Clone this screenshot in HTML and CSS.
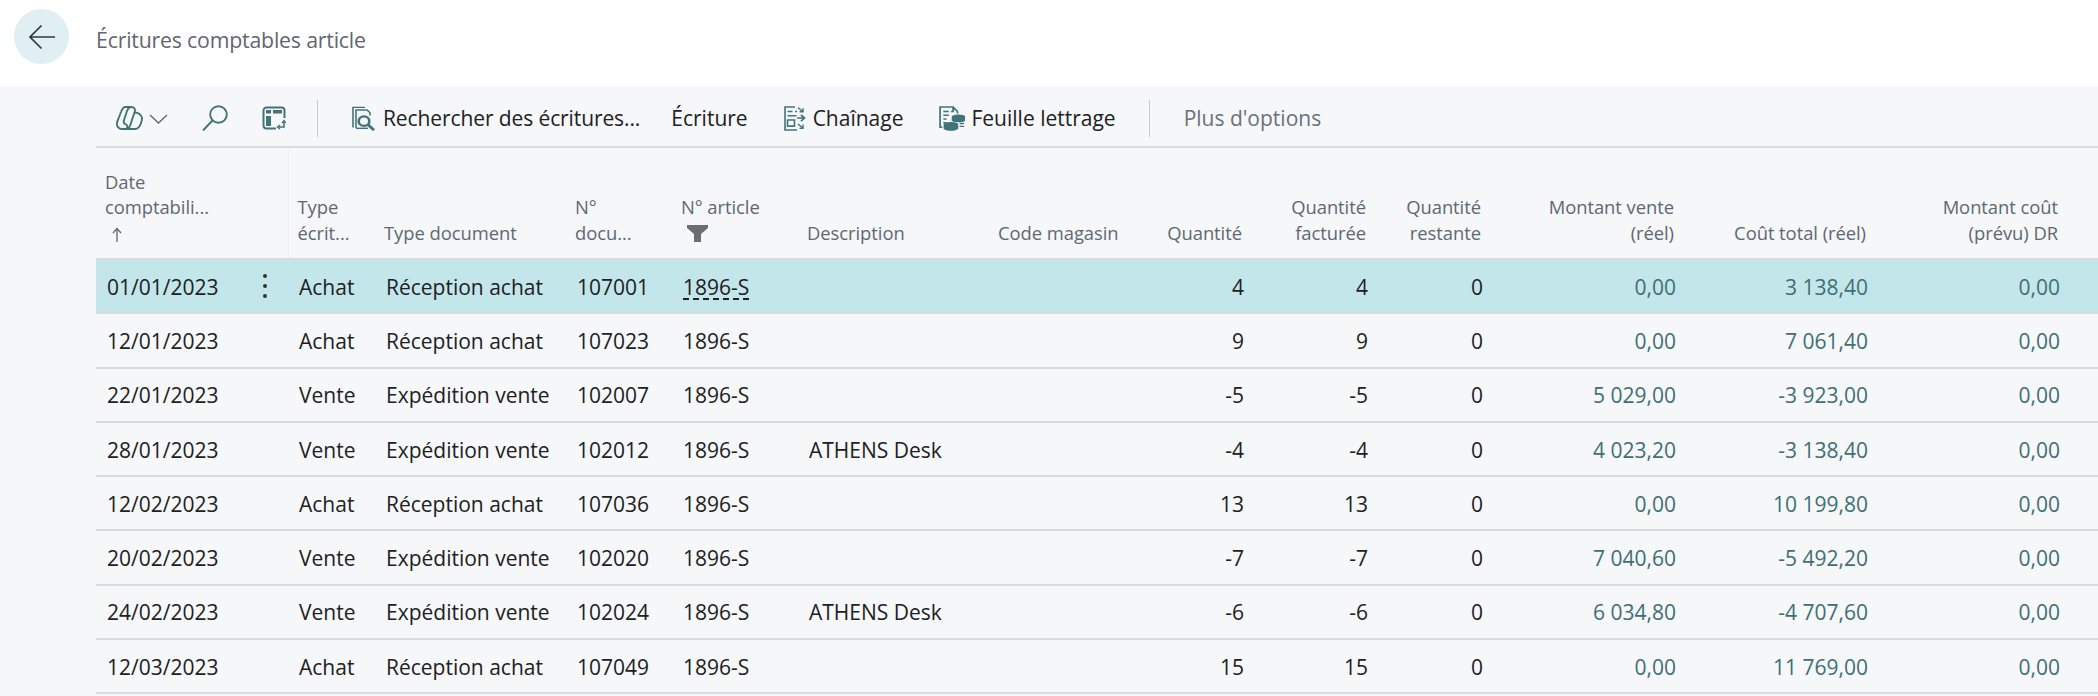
FILE: index.html
```html
<!DOCTYPE html>
<html lang="fr">
<head>
<meta charset="utf-8">
<title>Écritures comptables article</title>
<link rel="stylesheet" href="styles.css">
</head>
<body>
<header class="page-head">
  <button class="back" aria-label="Retour">
    <svg width="28" height="26" viewBox="0 0 28 26"><path d="M27 13H2M13.500 1.500 2 13l11.500 11.500" fill="none" stroke="#2f3b3f" stroke-width="1.700"/></svg>
  </button>
  <h1 class="title">Écritures comptables article</h1>
</header>
<main class="content">
  <nav class="toolbar">
    <span class="ic ic-copilot"><svg width="27" height="24" viewBox="0 0 27 24" fill="none" stroke="#417479" stroke-width="1.900"><path d="M9.500 1h6c2.800 0 4 2.200 3.200 4.700L14 20c-.8 2.200-2.500 3-5 3H6c-3.500 0-5.500-3-5-6 .2-1.500.8-3 1.500-4.500L5 6C6 3 7 1 9.500 1z"/><path d="M19 6.500c3 0 6.500 2 7 5.500.2 1.500-.5 3.500-1 5-1 3.500-2.500 6-6 6H9"/><path d="M15.500 1c-2 0-3.500 1.500-4.500 4L8 14c-.7 2-.3 3.500 2 4.500 1.500.7 2 2.500.5 4.500"/></svg></span>
    <span class="ic ic-chevron"><svg width="19" height="10" viewBox="0 0 19 10"><path d="M1 1l8.500 8L18 1" fill="none" stroke="#5b6b70" stroke-width="1.300"/></svg></span>
    <span class="ic ic-search"><svg width="26" height="26" viewBox="0 0 26 26" fill="none" stroke="#417479" stroke-width="1.900"><circle cx="16.500" cy="9.500" r="8.300"/><path d="M10.500 15.500 1 25.500"/></svg></span>
    <span class="ic ic-layout"><svg width="24" height="24" viewBox="0 0 24 24"><path d="M14 22.500H4.500a3 3 0 0 1-3-3V4.500a3 3 0 0 1 3-3h15a3 3 0 0 1 3 3V12" fill="none" stroke="#417479" stroke-width="2"/><rect x="4" y="4" width="5" height="3.500" fill="#417479"/><rect x="11" y="4" width="9" height="3.500" fill="#417479"/><rect x="4" y="10" width="5" height="10" fill="#417479"/><path d="M22 15v6h-6" fill="none" stroke="#417479" stroke-width="1.500"/><path d="M20 17l2-2.500 2 2.500M18 19l-2.500 2 2.500 2" fill="none" stroke="#417479" stroke-width="1.300"/></svg></span>
    <span class="sep sep-a"></span>
    <a class="action act-find"><svg width="26" height="25" viewBox="0 0 26 28" preserveAspectRatio="none" fill="none" stroke="#417479"><path d="M2 24V1.500h12M5 24.500V4.500h11l3 3v3" stroke-width="1.600"/><path d="M5 25h12" stroke-width="1.600"/><circle cx="13" cy="17" r="5.300" stroke-width="2.600"/><path d="M17 21l6 6" stroke-width="3"/></svg>Rechercher des écritures...</a>
    <a class="action act-entry">Écriture</a>
    <a class="action act-chain"><svg width="22" height="25" viewBox="0 0 22 27" preserveAspectRatio="none" fill="none" stroke="#417479" stroke-width="1.600"><path d="M11 1H1v25h12M11 6h2M3.500 6h5M3.500 10.500h9M3.500 15h1M3.500 15V21.500h7V15zM3.500 22h7"/><path d="M14 2l5 4M19 2.500V6.200h-3.500" stroke-width="1.400"/><path d="M13 13h7M17 9.500l3.500 3.500-3.500 3.500" stroke-width="1.800"/><path d="M14 19.500l5 4.500M19 20v4.200h-3.500" stroke-width="1.400"/></svg>Chaînage</a>
    <a class="action act-sheet"><svg width="26" height="25" viewBox="0 0 24 27" preserveAspectRatio="none" fill="none" stroke="#417479" stroke-width="1.600"><path d="M9 1H1v22h2M9 1h4v5h-2M13 1l4 5v2M4 6h5M4 10h5M4 14h3M4 18h3"/><ellipse cx="18" cy="12" rx="5.500" ry="2" fill="#417479"/><path d="M12.500 13v2.500c2 1.800 9 1.800 11 0V13" fill="#417479"/><ellipse cx="11" cy="20" rx="6" ry="2" fill="#417479"/><path d="M5 21v3c2 2.500 10 2.500 12 0v-3" fill="#417479"/><path d="M19 19h4M19 22h4"/></svg>Feuille lettrage</a>
    <span class="sep sep-b"></span>
    <a class="action act-more">Plus d'options</a>
  </nav>
  <table class="grid">
    <colgroup>
      <col class="c-date"><col class="c-type"><col class="c-doc"><col class="c-no"><col class="c-item"><col class="c-desc"><col class="c-loc"><col class="c-qty"><col class="c-inv"><col class="c-rem"><col class="c-sale"><col class="c-cost"><col class="c-exp"><col class="c-end">
    </colgroup>
    <thead>
      <tr>
        <th class="freeze">Date<br>comptabili...<br><svg class="sort" width="10" height="15" viewBox="0 0 10 15"><path d="M5 15V1.500M1 6l4-4.500L9 6" fill="none" stroke="#5f6870" stroke-width="1.300"/></svg></th>
        <th>Type<br>écrit...</th>
        <th>Type document</th>
        <th>N°<br>docu...</th>
        <th>N° article<br><svg class="filter" width="21" height="17" viewBox="0 0 21 17"><path d="M0 0h21v3l-7 6v8H7V9L0 3z" fill="#6d6d6d"/></svg></th>
        <th>Description</th>
        <th>Code magasin</th>
        <th class="num">Quantité</th>
        <th class="num">Quantité<br>facturée</th>
        <th class="num">Quantité<br>restante</th>
        <th class="num">Montant vente<br>(réel)</th>
        <th class="num">Coût total (réel)</th>
        <th class="num">Montant coût<br>(prévu) DR</th>
        <th></th>
      </tr>
    </thead>
    <tbody>
      <tr class="selected"><td class="date-cell">01/01/2023<span class="dots"><i></i><i></i><i></i></span></td><td>Achat</td><td>Réception achat</td><td>107001</td><td><span class="current">1896-S</span></td><td></td><td></td><td class="num">4</td><td class="num">4</td><td class="num">0</td><td class="num link">0,00</td><td class="num link">3 138,40</td><td class="num link">0,00</td><td></td></tr>
      <tr><td>12/01/2023</td><td>Achat</td><td>Réception achat</td><td>107023</td><td>1896-S</td><td></td><td></td><td class="num">9</td><td class="num">9</td><td class="num">0</td><td class="num link">0,00</td><td class="num link">7 061,40</td><td class="num link">0,00</td><td></td></tr>
      <tr><td>22/01/2023</td><td>Vente</td><td>Expédition vente</td><td>102007</td><td>1896-S</td><td></td><td></td><td class="num">-5</td><td class="num">-5</td><td class="num">0</td><td class="num link">5 029,00</td><td class="num link">-3 923,00</td><td class="num link">0,00</td><td></td></tr>
      <tr><td>28/01/2023</td><td>Vente</td><td>Expédition vente</td><td>102012</td><td>1896-S</td><td>ATHENS Desk</td><td></td><td class="num">-4</td><td class="num">-4</td><td class="num">0</td><td class="num link">4 023,20</td><td class="num link">-3 138,40</td><td class="num link">0,00</td><td></td></tr>
      <tr><td>12/02/2023</td><td>Achat</td><td>Réception achat</td><td>107036</td><td>1896-S</td><td></td><td></td><td class="num">13</td><td class="num">13</td><td class="num">0</td><td class="num link">0,00</td><td class="num link">10 199,80</td><td class="num link">0,00</td><td></td></tr>
      <tr><td>20/02/2023</td><td>Vente</td><td>Expédition vente</td><td>102020</td><td>1896-S</td><td></td><td></td><td class="num">-7</td><td class="num">-7</td><td class="num">0</td><td class="num link">7 040,60</td><td class="num link">-5 492,20</td><td class="num link">0,00</td><td></td></tr>
      <tr><td>24/02/2023</td><td>Vente</td><td>Expédition vente</td><td>102024</td><td>1896-S</td><td>ATHENS Desk</td><td></td><td class="num">-6</td><td class="num">-6</td><td class="num">0</td><td class="num link">6 034,80</td><td class="num link">-4 707,60</td><td class="num link">0,00</td><td></td></tr>
      <tr><td>12/03/2023</td><td>Achat</td><td>Réception achat</td><td>107049</td><td>1896-S</td><td></td><td></td><td class="num">15</td><td class="num">15</td><td class="num">0</td><td class="num link">0,00</td><td class="num link">11 769,00</td><td class="num link">0,00</td><td></td></tr>
    </tbody>
  </table>
</main>
</body>
</html>
```
FILE: styles.css
```css
* { box-sizing: border-box; }
html, body { margin: 0; height: 100%; }
body {
  background: #f5f7f9;
  color: #212121;
  font-family: "Open Sans", "Noto Sans", sans-serif;
  overflow: hidden;
}
.page-head {
  height: 86px;
  background: #fff;
  display: flex;
  align-items: flex-start;
}
.back {
  width: 55px;
  height: 55px;
  margin: 9px 0 0 14px;
  padding: 0;
  border: 0;
  border-radius: 50%;
  background: #e0eff1;
  display: flex;
  align-items: center;
  justify-content: center;
}
.title {
  margin: 24px 0 0 27px;
  font-size: 21.300px;
  line-height: 32px;
  font-weight: 400;
  letter-spacing: -.2px;
  color: #5f6770;
}
.content { padding-left: 96px; }
.toolbar {
  height: 62px;
  padding-top: 4px;
  border-bottom: 2px solid #d8dadd;
  display: flex;
  align-items: center;
  font-size: 21px;
}
.ic { display: flex; align-items: center; }
.ic-copilot { margin-left: 20px; }
.ic-chevron { margin-left: 6px; margin-top: 2px; }
.ic-search { margin-left: 34px; }
.ic-layout { margin-left: 34px; }
.sep { width: 1px; height: 37px; background: #c9ccce; }
.sep-a { margin-left: 31px; }
.sep-b { margin-left: 33px; }
.action { display: flex; align-items: center; gap: 6px; color: #212121; white-space: nowrap; }
.act-find { margin-left: 33px; letter-spacing: -.1px; }
.act-entry { margin-left: 31px; }
.act-chain { margin-left: 36px; gap: 7px; }
.act-sheet { margin-left: 36px; gap: 6px; }
.act-more { margin-left: 34px; color: #6a7178; }
.grid {
  width: 2002px;
  table-layout: fixed;
  border-collapse: collapse;
}
.c-date { width: 192px; }
.c-type { width: 87px; }
.c-doc { width: 191px; }
.c-no { width: 106px; }
.c-item { width: 126px; }
.c-desc { width: 191px; }
.c-loc { width: 141px; }
.c-qty { width: 123px; }
.c-inv { width: 124px; }
.c-rem { width: 115px; }
.c-sale { width: 193px; }
.c-cost { width: 192px; }
.c-exp { width: 192px; }
.c-end { width: 29px; }
thead tr { height: 111px; }
th {
  padding: 0 11px 13px 9px;
  font-size: 18.400px;
  line-height: 25.500px;
  font-weight: 400;
  letter-spacing: -.05px;
  color: #5f6870;
  text-align: left;
  vertical-align: bottom;
  border-bottom: 2px solid #d8dadd;
  white-space: nowrap;
}
th.freeze { border-right: 1px solid #f0f2f4; }
tbody tr { height: 54.300px; }
td {
  padding: 1px 9px 0 11px;
  font-size: 21px;
  border-bottom: 2px solid #d8dadd;
  white-space: nowrap;
  vertical-align: middle;
}
.num { text-align: right; }
.link { color: #3f6f74; }
.selected td { background: #c3e6eb; }
.date-cell { position: relative; }
.dots {
  position: absolute;
  left: 167px;
  top: 50%;
  transform: translateY(-50%);
  display: flex;
  flex-direction: column;
  gap: 6px;
}
.dots i { display: block; width: 4px; height: 4px; background: #333; border-radius: 50%; }
.current {
  text-decoration: underline dashed #212121 2px;
  text-underline-offset: 4px;
}
.sort { margin-left: 7px; vertical-align: -2px; }
.filter { margin-left: 6px; vertical-align: -2px; }
```
